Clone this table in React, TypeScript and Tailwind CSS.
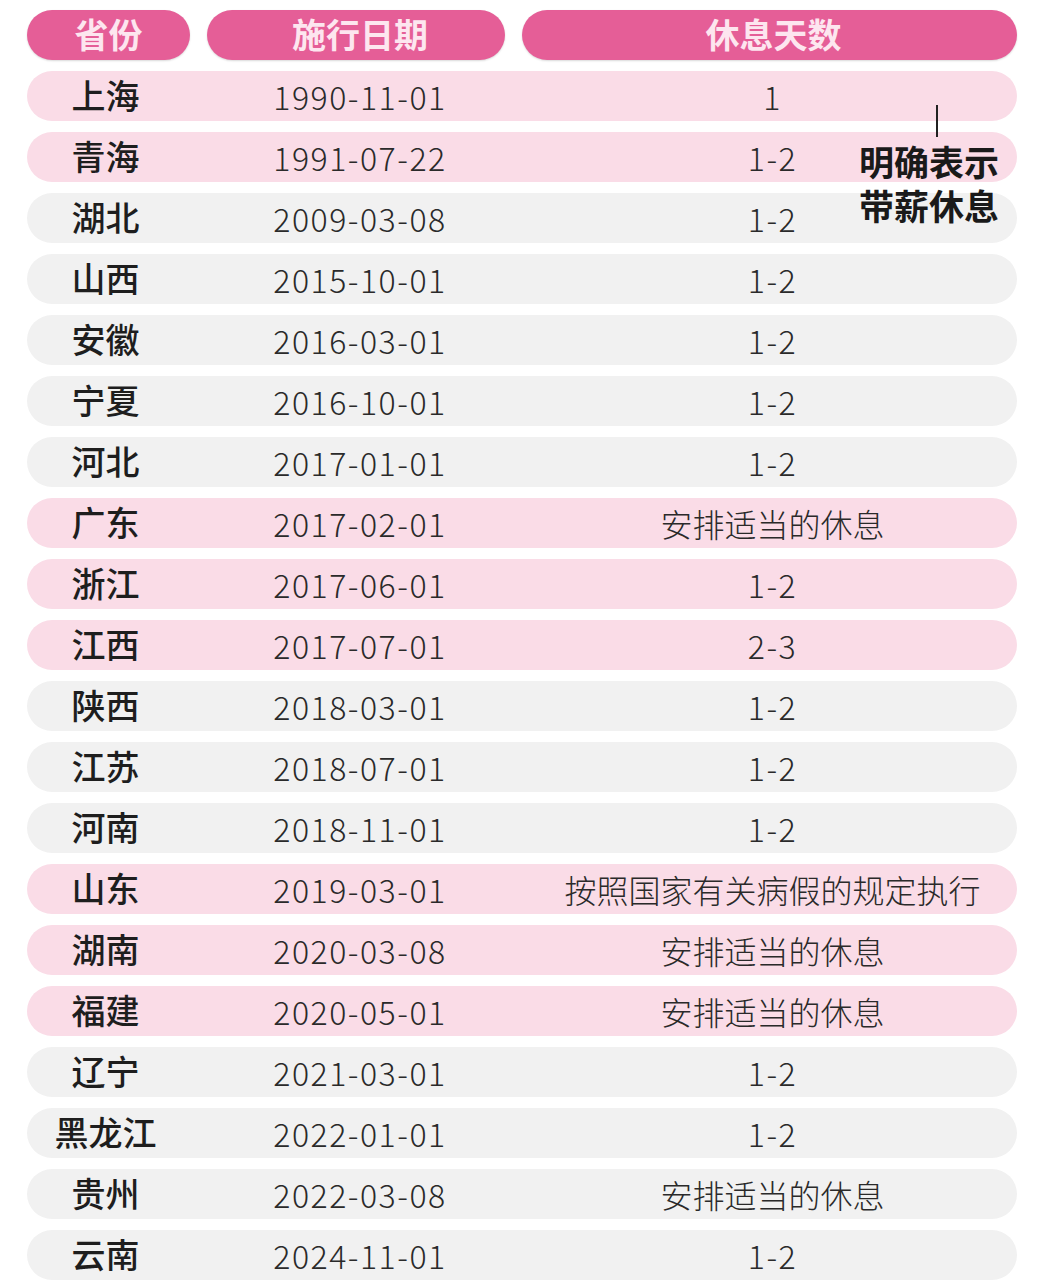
import React from "react";

type Row = { p: string; d: string; r: string; pink: boolean };

const rows: Row[] = [
  { p: "上海", d: "1990-11-01", r: "1", pink: true },
  { p: "青海", d: "1991-07-22", r: "1-2", pink: true },
  { p: "湖北", d: "2009-03-08", r: "1-2", pink: false },
  { p: "山西", d: "2015-10-01", r: "1-2", pink: false },
  { p: "安徽", d: "2016-03-01", r: "1-2", pink: false },
  { p: "宁夏", d: "2016-10-01", r: "1-2", pink: false },
  { p: "河北", d: "2017-01-01", r: "1-2", pink: false },
  { p: "广东", d: "2017-02-01", r: "安排适当的休息", pink: true },
  { p: "浙江", d: "2017-06-01", r: "1-2", pink: true },
  { p: "江西", d: "2017-07-01", r: "2-3", pink: true },
  { p: "陕西", d: "2018-03-01", r: "1-2", pink: false },
  { p: "江苏", d: "2018-07-01", r: "1-2", pink: false },
  { p: "河南", d: "2018-11-01", r: "1-2", pink: false },
  { p: "山东", d: "2019-03-01", r: "按照国家有关病假的规定执行", pink: true },
  { p: "湖南", d: "2020-03-08", r: "安排适当的休息", pink: true },
  { p: "福建", d: "2020-05-01", r: "安排适当的休息", pink: true },
  { p: "辽宁", d: "2021-03-01", r: "1-2", pink: false },
  { p: "黑龙江", d: "2022-01-01", r: "1-2", pink: false },
  { p: "贵州", d: "2022-03-08", r: "安排适当的休息", pink: false },
  { p: "云南", d: "2024-11-01", r: "1-2", pink: false },
];

const font = { fontFamily: '"Noto Sans CJK SC", "Noto Sans", sans-serif' };

export default function App() {
  return (
    <div className="relative w-[1042px] h-[1281px] bg-white pl-[27px] pr-[25px] pt-[10px]" style={font}>
      <div className="flex flex-col gap-[11px]">
        <div className="flex gap-[17px] h-[50px]">
          <div className="w-[163px] rounded-full bg-[#e55e97] shadow-[0_1px_2px_rgba(0,0,0,0.15)] flex items-center justify-center pb-[2px] text-[#fde6ef] font-bold text-[34px] leading-none">省份</div>
          <div className="w-[298px] rounded-full bg-[#e55e97] shadow-[0_1px_2px_rgba(0,0,0,0.15)] flex items-center justify-center pb-[2px] pl-[8px] text-[#fde6ef] font-bold text-[34px] leading-none">施行日期</div>
          <div className="flex-1 rounded-full bg-[#e55e97] shadow-[0_1px_2px_rgba(0,0,0,0.15)] flex items-center justify-center pb-[2px] pl-[8px] text-[#fde6ef] font-bold text-[34px] leading-none">休息天数</div>
        </div>
        {rows.map((row) => (
          <div
            key={row.p}
            className={
              "flex gap-[17px] h-[50px] rounded-full " +
              (row.pink ? "bg-[#fadce7]" : "bg-[#f1f1f1]")
            }
          >
            <div className="w-[163px] flex items-center justify-center pr-[6px] pb-[3px] text-[#1e1e1e] font-medium text-[34px] leading-none">
              {row.p}
            </div>
            <div className="w-[298px] flex items-center justify-center pl-[8px] pb-[1px] text-[#2a2a2a] font-light text-[32px] tracking-[1.5px] leading-none">
              {row.d}
            </div>
            <div className="flex-1 flex items-center justify-center pl-[6px] pb-[1px] text-[#2a2a2a] font-light text-[32px] leading-none">
              <span className={row.r.length <= 3 ? "tracking-[1.5px]" : ""}>{row.r}</span>
            </div>
          </div>
        ))}
      </div>
      <div className="absolute left-[936px] top-[105px] w-[2px] h-[32px] bg-[#222]" />
      <div className="absolute left-[859px] top-[143px] flex flex-col gap-[9px] text-[#1a1a1a] font-bold text-[35px] leading-none">
        <div>明确表示</div>
        <div>带薪休息</div>
      </div>
    </div>
  );
}
